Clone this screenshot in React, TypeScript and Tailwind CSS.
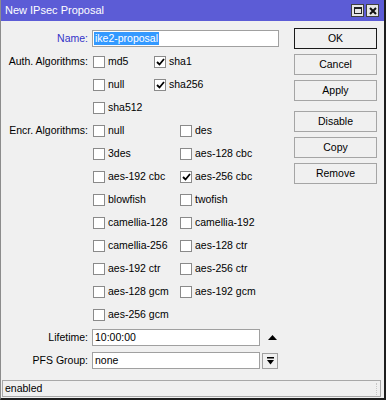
import React from 'react';

const font = { fontFamily: '"Liberation Sans", Arial, sans-serif' };

const Check: React.FC<{ label: string; checked?: boolean; className?: string }> = ({ label, checked, className }) => (
  <div className={`flex items-center ${className ?? ''}`}>
    <div className="w-[12px] h-[12px] ml-[1px] border border-[#8a8a8a] bg-white flex items-center justify-center">
      {checked && (
        <svg width="9" height="8" viewBox="0 0 9 8">
          <path d="M1 4 L3.5 6.5 L8 1" fill="none" stroke="#000" strokeWidth="1.8" />
        </svg>
      )}
    </div>
    <span className="ml-[3px]">{label}</span>
  </div>
);

const Row: React.FC<{ label?: string; labelClass?: string; children?: React.ReactNode }> = ({ label, labelClass, children }) => (
  <div className="h-[23px] flex items-center">
    <div className={`w-[91px] pr-[4px] text-right shrink-0 ${labelClass ?? ''}`}>{label ? `${label}:` : ''}</div>
    {children}
  </div>
);

const Btn: React.FC<{ label: string; primary?: boolean; className?: string }> = ({ label, primary, className }) => (
  <div
    className={`h-[21px] flex items-center justify-center bg-[#f0f0f0] border ${
      primary ? 'border-[#1a1a1a]' : 'border-[#a5a5a5]'
    } ${className ?? ''}`}
  >
    {label}
  </div>
);

const encr: [string, boolean, string?, boolean?][] = [
  ['null', false, 'des', false],
  ['3des', false, 'aes-128 cbc', false],
  ['aes-192 cbc', false, 'aes-256 cbc', true],
  ['blowfish', false, 'twofish', false],
  ['camellia-128', false, 'camellia-192', false],
  ['camellia-256', false, 'aes-128 ctr', false],
  ['aes-192 ctr', false, 'aes-256 ctr', false],
  ['aes-128 gcm', false, 'aes-192 gcm', false],
  ['aes-256 gcm', false],
];

export default function App() {
  return (
    <div
      className="w-[386px] h-[400px] bg-[#f0f0f0] flex flex-col border-l border-[#8c8c8c] border-r-2 border-r-[#1e1e1e] border-b-2 border-b-[#1e1e1e] text-[10.5px] text-black overflow-hidden"
      style={font}
    >
      {/* title bar */}
      <div className="h-[21px] shrink-0 bg-[#5c5cd6] flex items-center justify-between pl-[4px] pr-[5px]">
        <span className="text-[11px] text-white">New IPsec Proposal</span>
        <div className="flex gap-[2px]">
          <div className="w-[13px] h-[13px] bg-[#e6e6e6] border border-[#404040] flex items-center justify-center">
            <div className="w-[8px] h-[7px] border border-[#222] border-t-2" />
          </div>
          <div className="w-[13px] h-[13px] bg-[#e6e6e6] border border-[#404040] flex items-center justify-center">
            <svg width="8" height="8" viewBox="0 0 8 8">
              <path d="M1 1 L7 7 M7 1 L1 7" stroke="#111" strokeWidth="2" />
            </svg>
          </div>
        </div>
      </div>

      {/* body */}
      <div className="flex flex-1 pt-[6px]">
        <div className="w-[293px] flex flex-col">
          <Row label="Name" labelClass="text-[#3333c8]">
            <div className="w-[187px] h-[17px] bg-white border border-[#a0a0a0] flex items-center pl-[1px]">
              <span className="bg-[#3399ff] text-white leading-[13px] px-[1px]">ike2-proposal</span>
            </div>
          </Row>
          <Row label="Auth. Algorithms">
            <Check label="md5" className="w-[61px]" />
            <Check label="sha1" checked />
          </Row>
          <Row>
            <Check label="null" className="w-[61px]" />
            <Check label="sha256" checked />
          </Row>
          <Row>
            <Check label="sha512" />
          </Row>
          {encr.map(([a, ac, b, bc], i) => (
            <Row key={a} label={i === 0 ? 'Encr. Algorithms' : undefined}>
              <Check label={a} checked={ac} className="w-[87px]" />
              {b && <Check label={b} checked={bc} />}
            </Row>
          ))}
          <Row label="Lifetime">
            <div className="w-[168px] h-[17px] bg-white border border-[#a0a0a0] flex items-center pl-[2px]">10:00:00</div>
            <svg className="ml-[8px]" width="9" height="5" viewBox="0 0 9 5">
              <path d="M0 5 L4.5 0 L9 5 Z" fill="#000" />
            </svg>
          </Row>
          <Row label="PFS Group">
            <div className="w-[168px] h-[17px] bg-white border border-[#a0a0a0] flex items-center pl-[2px]">none</div>
            <div className="ml-[2px] w-[16px] h-[16px] bg-[#f0f0f0] border border-[#a0a0a0] flex items-center justify-center">
              <svg width="7" height="8" viewBox="0 0 7 8">
                <rect x="0" y="0" width="7" height="1.5" fill="#000" />
                <path d="M0 3 L7 3 L3.5 7.5 Z" fill="#000" />
              </svg>
            </div>
          </Row>
        </div>

        <div className="w-[83px] flex flex-col pt-[1px]">
          <Btn label="OK" primary />
          <Btn label="Cancel" className="mt-[5px]" />
          <Btn label="Apply" className="mt-[5px]" />
          <Btn label="Disable" className="mt-[10px]" />
          <Btn label="Copy" className="mt-[5px]" />
          <Btn label="Remove" className="mt-[5px]" />
        </div>
      </div>

      {/* status bar */}
      <div className="mx-[1px] mb-[1px] mr-[3px] h-[17px] shrink-0 border border-[#a8a8a8] flex items-center justify-between pl-[2px]">
        <span>enabled</span>
        <div className="w-[3px] h-[12px] mr-[1px] border-l border-dotted border-[#c8c8c8]" />
      </div>
    </div>
  );
}
